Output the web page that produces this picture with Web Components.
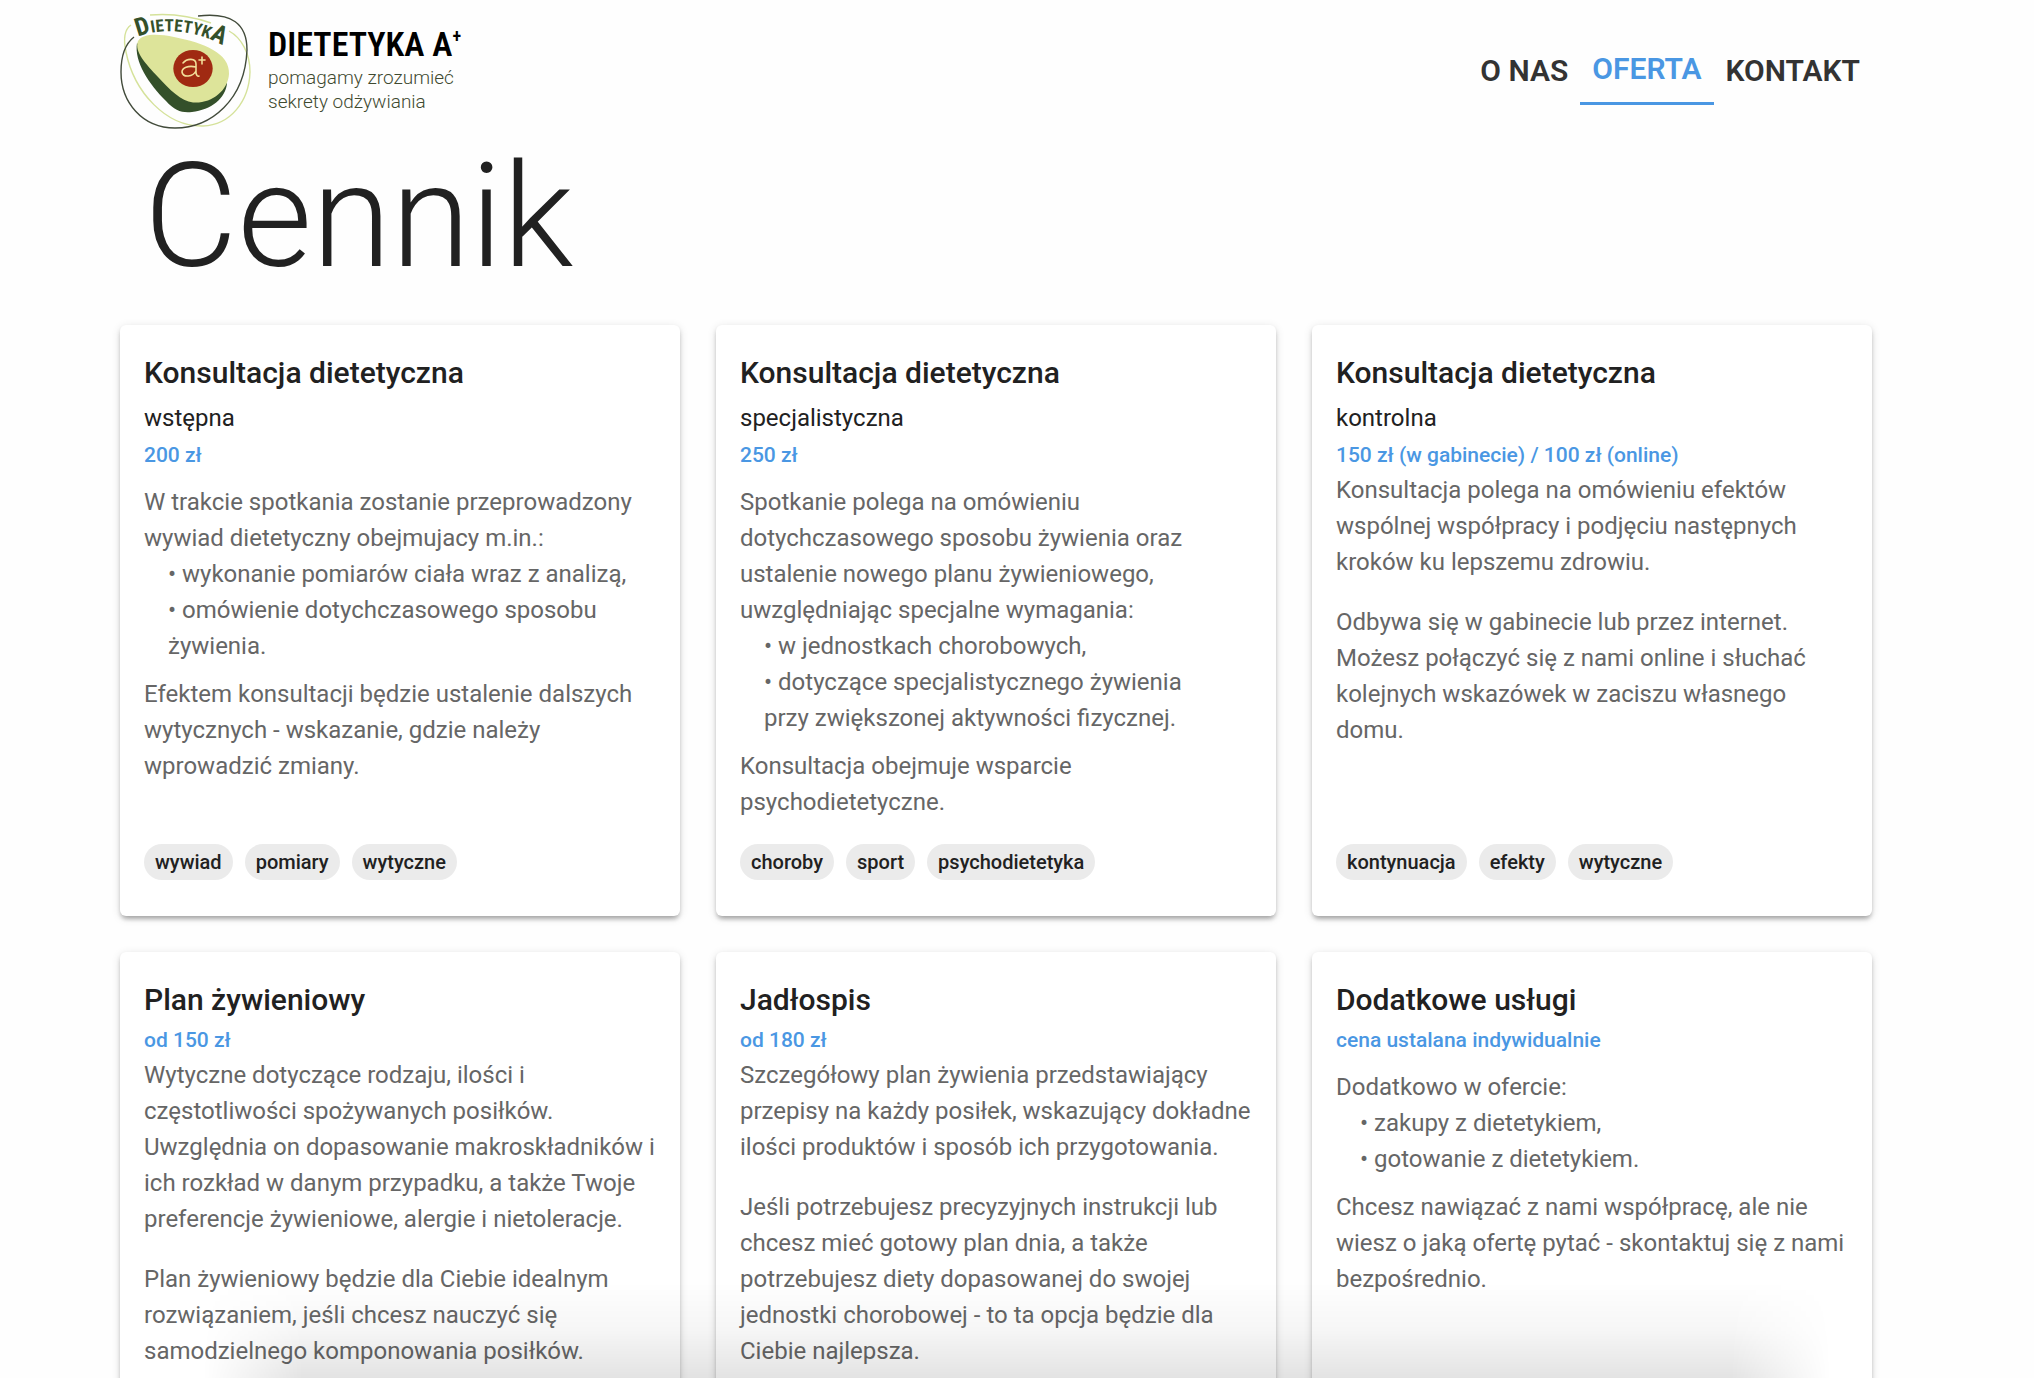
<!DOCTYPE html>
<html lang="pl">
<head>
<meta charset="utf-8">
<meta name="viewport" content="width=device-width, initial-scale=1">
<title>Cennik – Dietetyka A+</title>
<style>
  html { --ink: #212121; --muted: #666; --accent: #4a97e3; --chip: #ebebeb; --left: 120px; --right: 162px; }
  body { margin: 0; background: #fefefe; color: var(--ink); font: 400 24px/36px Roboto, sans-serif; }
  p { margin: 0; }
  p + p { margin-top: 24px; }
  .spaced { margin: 12px 0; }
  ul { margin: 0; padding: 0 24px; list-style: none; }
  li::before { content: "• "; }
</style>
</head>
<body>
<site-header>
  <brand-logo slot="brand"></brand-logo>
  <nav-link href="#o-nas">O NAS</nav-link>
  <nav-link href="#oferta" active>OFERTA</nav-link>
  <nav-link href="#kontakt">KONTAKT</nav-link>
</site-header>
<price-list heading="Cennik">
  <offer-card name="Konsultacja dietetyczna" kind="wstępna" price="200 zł" tags="wywiad,pomiary,wytyczne">
    <div class="spaced">W trakcie spotkania zostanie przeprowadzony wywiad dietetyczny obejmujacy m.in.:
      <ul><li>wykonanie pomiarów ciała wraz z analizą,</li><li>omówienie dotychczasowego sposobu żywienia.</li></ul></div>
    <p>Efektem konsultacji będzie ustalenie dalszych wytycznych - wskazanie, gdzie należy wprowadzić zmiany.</p>
  </offer-card>
  <offer-card name="Konsultacja dietetyczna" kind="specjalistyczna" price="250 zł" tags="choroby,sport,psychodietetyka">
    <div class="spaced">Spotkanie polega na omówieniu dotychczasowego sposobu żywienia oraz ustalenie nowego planu żywieniowego, uwzględniając specjalne wymagania:
      <ul><li>w jednostkach chorobowych,</li><li>dotyczące specjalistycznego żywienia przy zwiększonej aktywności fizycznej.</li></ul></div>
    <p>Konsultacja obejmuje wsparcie psychodietetyczne.</p>
  </offer-card>
  <offer-card name="Konsultacja dietetyczna" kind="kontrolna" price="150 zł (w gabinecie) / 100 zł (online)" tags="kontynuacja,efekty,wytyczne">
    <p>Konsultacja polega na omówieniu efektów wspólnej współpracy i podjęciu następnych kroków ku lepszemu zdrowiu.</p>
    <p>Odbywa się w gabinecie lub przez internet. Możesz połączyć się z nami online i słuchać kolejnych wskazówek w zaciszu własnego domu.</p>
  </offer-card>
  <offer-card name="Plan żywieniowy" price="od 150 zł">
    <p>Wytyczne dotyczące rodzaju, ilości i częstotliwości spożywanych posiłków. Uwzględnia on dopasowanie makroskładników i ich rozkład w danym przypadku, a także Twoje preferencje żywieniowe, alergie i nietoleracje.</p>
    <p>Plan żywieniowy będzie dla Ciebie idealnym rozwiązaniem, jeśli chcesz nauczyć się samodzielnego komponowania posiłków.</p>
  </offer-card>
  <offer-card name="Jadłospis" price="od 180 zł">
    <p>Szczegółowy plan żywienia przedstawiający przepisy na każdy posiłek, wskazujący dokładne ilości produktów i sposób ich przygotowania.</p>
    <p>Jeśli potrzebujesz precyzyjnych instrukcji lub chcesz mieć gotowy plan dnia, a także potrzebujesz diety dopasowanej do swojej jednostki chorobowej - to ta opcja będzie dla Ciebie najlepsza.</p>
  </offer-card>
  <offer-card name="Dodatkowe usługi" price="cena ustalana indywidualnie">
    <div class="spaced">Dodatkowo w ofercie:
      <ul><li>zakupy z dietetykiem,</li><li>gotowanie z dietetykiem.</li></ul></div>
    <p>Chcesz nawiązać z nami współpracę, ale nie wiesz o jaką ofertę pytać - skontaktuj się z nami bezpośrednio.</p>
  </offer-card>
</price-list>
<bottom-shade></bottom-shade>

<script>
const define = (name, render) => customElements.define(name, class extends HTMLElement {
  constructor() {
    super();
    this.attachShadow({ mode: "open" }).innerHTML = render(this);
  }
});

define("site-header", () => `
  <style>
    :host { display: block; }
    header { display: flex; justify-content: space-between; align-items: center; padding: 12px var(--right) 5px var(--left); }
    nav { display: flex; align-items: center; }
  </style>
  <header><slot name="brand"></slot><nav><slot></slot></nav></header>`);

define("nav-link", el => `
  <style>
    :host { display: block; }
    a { display: block; padding: 16px 12px 15px; font-size: 30px; line-height: 36px; font-weight: 600; color: #333; text-decoration: none; }
    :host([active]) a { color: var(--accent); border-bottom: 3px solid var(--accent); }
  </style>
  <a href="${el.getAttribute("href")}"><slot></slot></a>`);

define("brand-logo", () => `
  <style>
    :host { display: block; }
    a { display: flex; align-items: center; gap: 18px; color: #3f4a30; text-decoration: none; }
    svg { display: block; overflow: visible; }
    .name { display: block; margin-bottom: 4px; color: #000; font: 600 34px/36px "Roboto Condensed", Roboto, sans-serif; }
    .name sup { font-size: 18px; line-height: 0; vertical-align: 14px; }
    .tag { display: block; font: 300 19px/24px Roboto, sans-serif; }
  </style>
  <a href="#start">
    <svg width="130" height="116" viewBox="120 12 130 116" role="img" aria-label="Dietetyka A+">
      <g fill="none" stroke-width="1.4">
        <path stroke="#d5e29a" d="M150 15C172 13 194 17 211 23M229 31C242 38 250 54 250 72C249 102 230 125 203 126C166 127 134 92 126 52C123 38 125 29 131 25"/>
        <path stroke="#424b3b" d="M198 16C232 12 247 24 247 50C245 100 211 128 175 128C142 128 121 102 121 72C121 55 125 44 134 37"/>
      </g>
      <path fill="#34502a" d="M137 43C134 62 149 84 166 101C175 111 182 113 192 112C211 110 226 98 227 83L192 98Z"/>
      <path fill="#dde49a" d="M138 41C143 33 159 34 174 37C204 43 230 53 229 74C228 91 211 104 193 102.500C181 101 170 90 158 77C146 64 134 52 138 41Z"/>
      <ellipse cx="193" cy="68.500" rx="19.700" ry="18.600" fill="#a02a12"/>
      <path fill="none" stroke="#f2df9a" stroke-width="1.600" stroke-linecap="round" d="M183 63C187 58 196 58 196 64V73Q197 77 199 76M196 67C188 65 182 68 182 72C183 78 193 77 196 71M199 60H205M202 57V64"/>
      <path id="arc" fill="none" d="M138 37C158 28 190 29 218 43L240 51"/>
      <text fill="#34502a" font-family="Roboto Condensed, Roboto, sans-serif" font-weight="700" font-size="17"><textPath href="#arc"><tspan font-size="25">D</tspan>IETETYK<tspan font-size="25">A</tspan></textPath></text>
    </svg>
    <span><span class="name">DIETETYKA A<sup>+</sup></span><span class="tag">pomagamy zrozumieć</span><span class="tag">sekrety odżywiania</span></span>
  </a>`);

define("price-list", el => `
  <style>
    :host { display: block; padding: 0 var(--right) 36px var(--left); }
    h1 { margin: 0 24px 24px; font-size: 144px; line-height: 168px; font-weight: 300; }
    section { display: grid; grid-template-columns: repeat(3, minmax(0, 1fr)); gap: 36px; }
  </style>
  <main><h1>${el.getAttribute("heading")}</h1><section><slot></slot></section></main>`);

define("offer-card", el => {
  const kind = el.getAttribute("kind");
  const tags = (el.getAttribute("tags") || "").split(",").filter(Boolean);
  return `
  <style>
    :host { display: flex; flex-direction: column; padding: 24px 24px 36px; border-radius: 6px; background: #fff;
      box-shadow: 0 5px 5px -3px rgba(0,0,0,.2), 0 3px 4px rgba(0,0,0,.14), 0 2px 10px rgba(0,0,0,.12); }
    h2 { margin: 0; font-size: 30px; line-height: 48px; font-weight: 500; }
    .kind { line-height: 42px; }
    .price { font-size: 21px; line-height: 33px; font-weight: 500; color: var(--accent); }
    .text { display: flow-root; flex: 1; color: var(--muted); }
    .tags { display: flex; gap: 12px; margin-top: 24px; }
    .tags span { padding: 0 11px; border-radius: 18px; background: var(--chip); font-size: 20px; line-height: 36px; font-weight: 500; }
  </style>
  <h2>${el.getAttribute("name")}</h2>
  ${kind ? `<div class="kind">${kind}</div>` : ""}
  <div class="price">${el.getAttribute("price")}</div>
  <div class="text"><slot></slot></div>
  ${tags.length ? `<div class="tags">${tags.map(t => `<span>${t}</span>`).join("")}</div>` : ""}`;
});

define("bottom-shade", () => `
  <style>
    :host { position: fixed; left: 10%; right: 10%; bottom: 0; height: 96px; pointer-events: none;
      background: linear-gradient(to top, rgba(0,0,0,.11), rgba(0,0,0,.035) 50%, transparent);
      mask-image: linear-gradient(to right, transparent, #000 100px, #000 calc(100% - 100px), transparent); }
  </style>`);
</script>
</body>
</html>
